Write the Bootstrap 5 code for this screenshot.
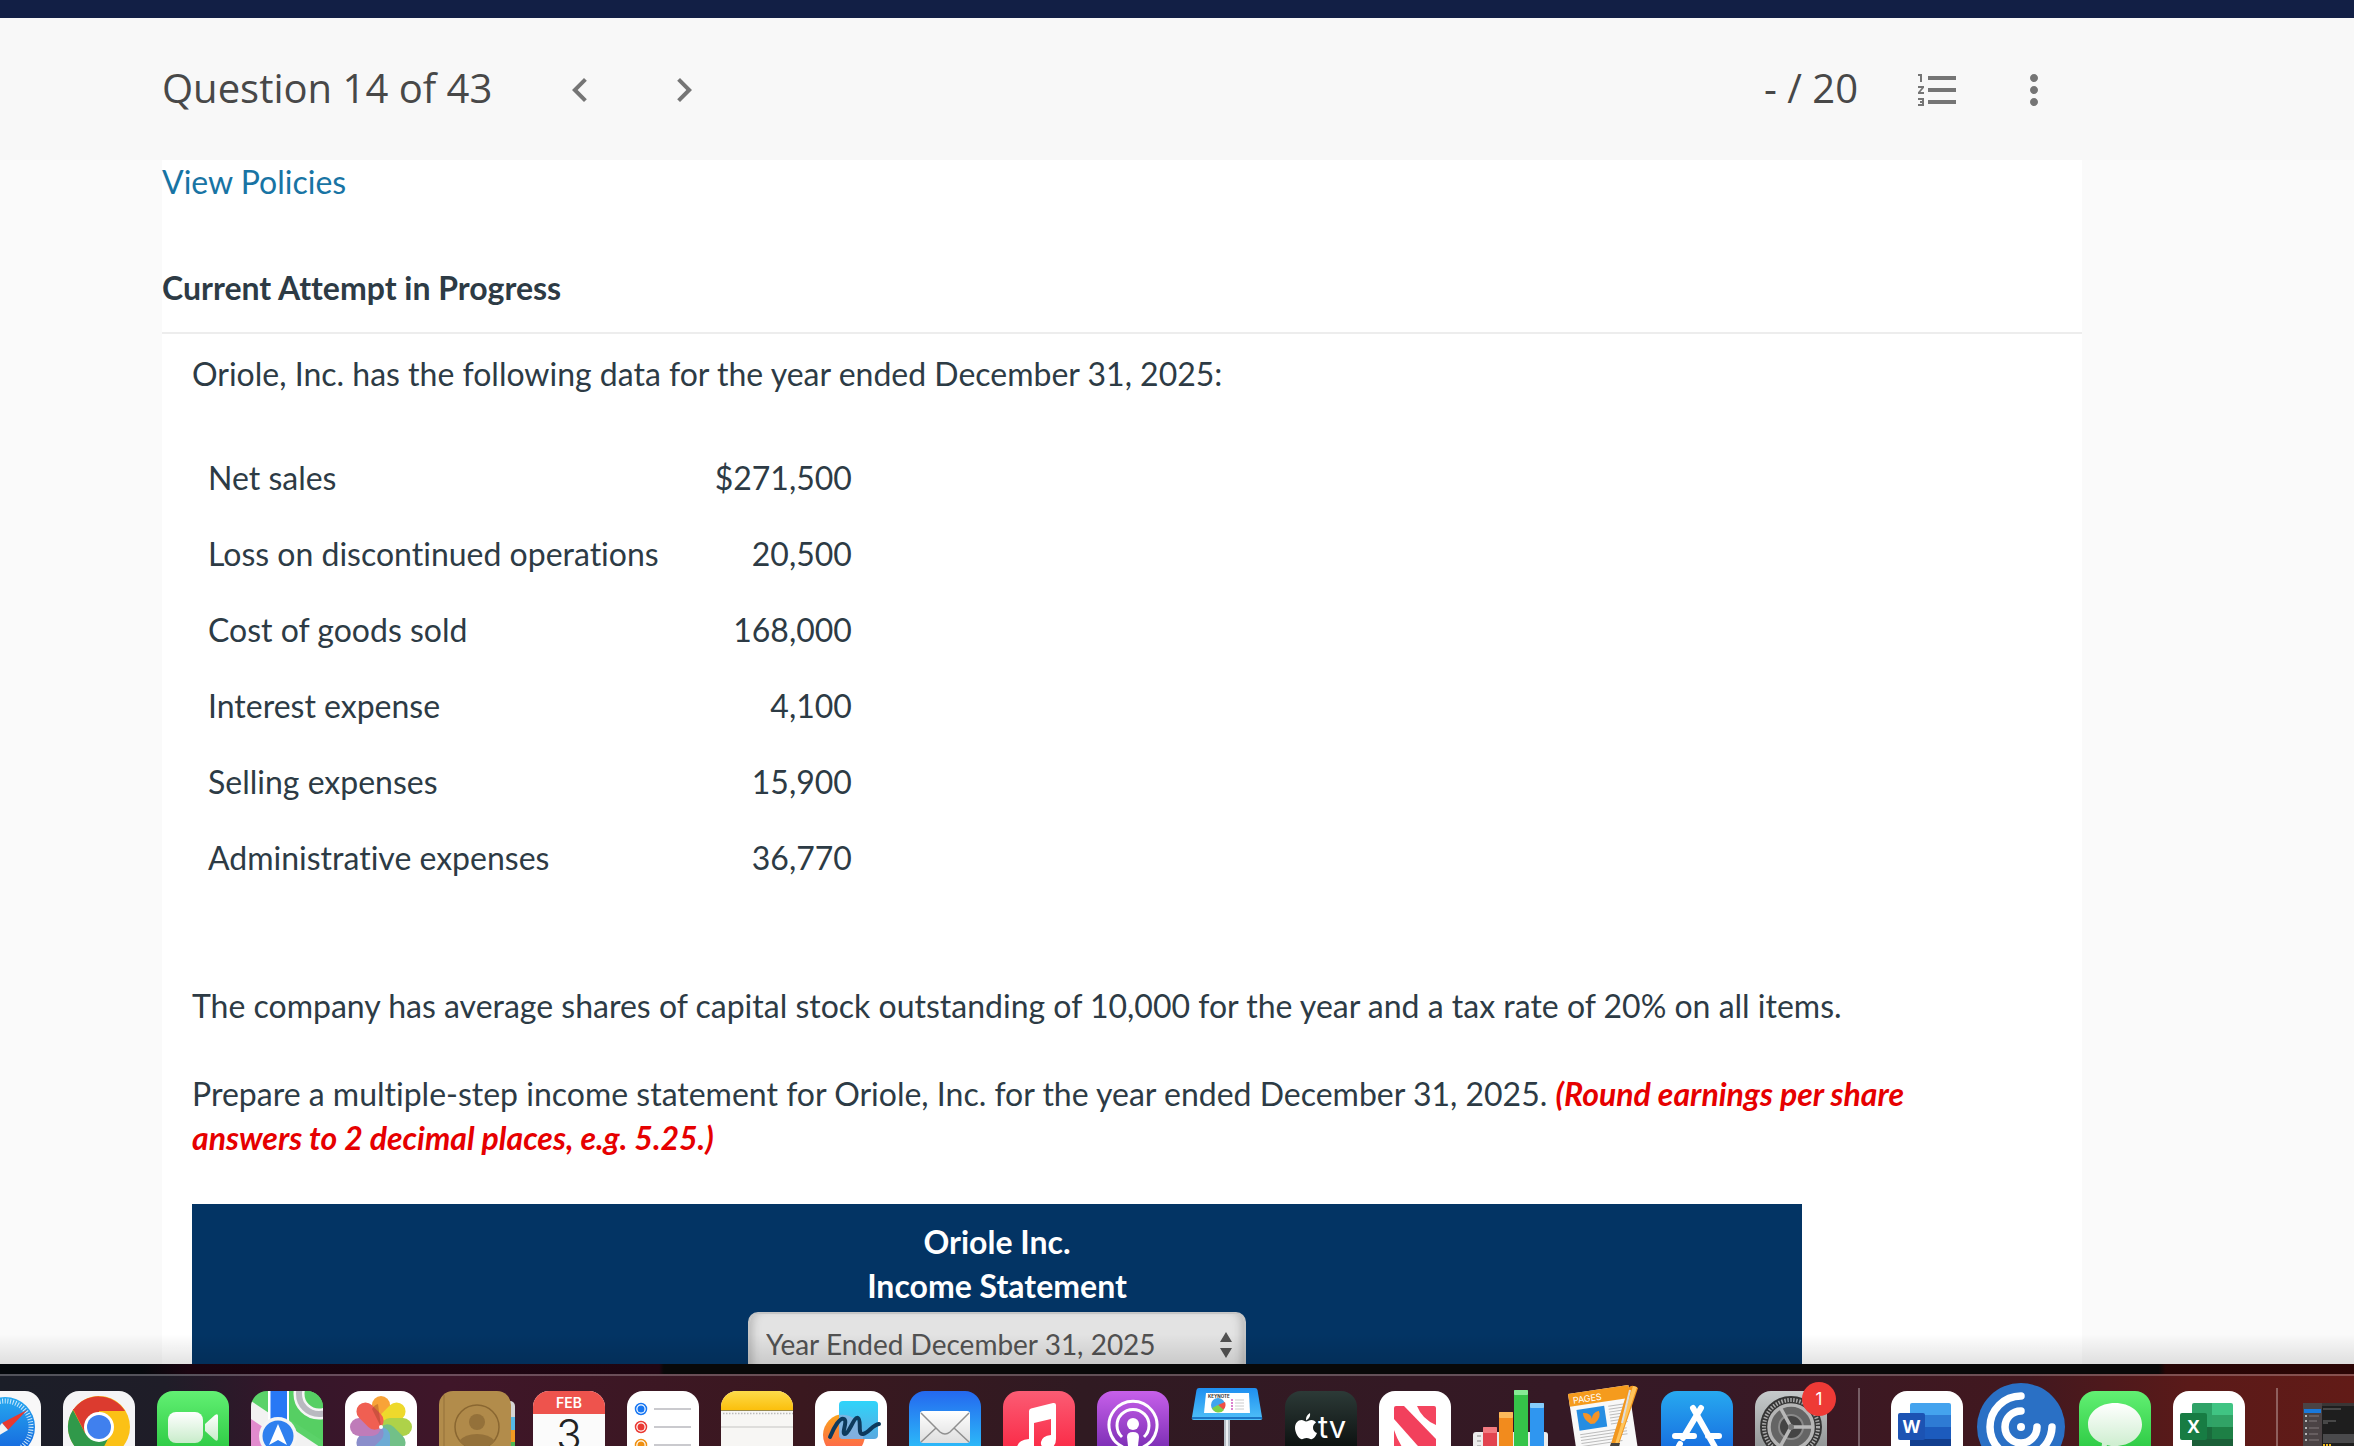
<!DOCTYPE html>
<html lang="en">
<head>
<meta charset="utf-8">
<meta name="viewport" content="width=device-width, initial-scale=1">
<title>Question 14 of 43</title>
<link href="https://cdn.jsdelivr.net/npm/bootstrap@5.3.0/dist/css/bootstrap.min.css" rel="stylesheet">
<style>
  body { font-family: Lato, "Liberation Sans", sans-serif; font-size: 32px; line-height: 44px; color: #2d3b45; background: #fafafa; font-variant-ligatures: none; }
  .top-strip { height: 18px; background: #121f45; }
  .page-gutter { padding-left: 162px; padding-right: 272px; }
  .question-bar { height: 142px; background: #f8f8f8; font-family: "Open Sans", sans-serif; font-size: 40px; color: #484848; padding-top: 2px; }
  .question-bar h1, .score { font-size: 40px; font-weight: 400; line-height: 48px; padding-bottom: 4px; }
  .question-nav { margin-left: 40px; }
  .icon-btn { width: 96px; height: 96px; padding: 0; border: 0; background: none; color: #757575; }
  .icon-btn svg { width: 48px; height: 48px; display: block; margin: 0 auto; fill: currentColor; }
  .viewport-area { min-height: 0; }
  .bottom-shade { height: 30px; background: linear-gradient(rgba(0,0,0,0), rgba(0,0,0,.11)); pointer-events: none; }
  .policy-link { color: #1874a4; text-decoration: none; }
  .attempt-title { font-size: 32px; line-height: 44px; font-weight: 700; padding: 62px 0 22px; border-bottom: 2px solid #ededed; }
  .question-body { padding: 18px 30px 0; }
  .data-table { margin-top: 44px; margin-bottom: 88px; }
  .data-table th, .data-table td { padding: 16px; line-height: 44px; font-weight: 400; }
  .data-table td { padding-left: 40px; }
  .round-note { color: #e60000; }
  .statement-head { width: 87%; max-width: 1610px; background: #033464; padding-top: 16px; margin-top: 44px; }
  .period-wrap { width: 498px; margin: 4px auto 0; }
  .period-select { height: 64px; font-size: 28px; line-height: 40px; color: #525252; border: 2px solid #c6c6c6; border-radius: 10px; padding: 8px 60px 8px 16px; background: #e3e3e3; box-shadow: inset 9px 0 8px -6px #b9b9b9, inset -9px 0 8px -6px #b9b9b9; }
  .period-arrows { right: 14px; top: 20px; width: 12px; height: 26px; pointer-events: none; }
  .dock { height: 82px; padding-top: 10px; background: linear-gradient(90deg, #04080c 0, #05080c 6%, #1a0410 8%, #200612 28%, #080808 28.2%, #080808 91.7%, #260505 92%, #2c0605 100%); }
  .dock-shelf { height: 72px; border-top: 2px solid rgba(255,255,255,.24); background: linear-gradient(90deg, #1b1e28 0, #1f1d28 7%, #35162a 12%, #3f1629 19%, #3a181f 34%, #301a22 46%, #341924 60%, #361926 72%, #42181f 86%, #5a1a19 93%, #621b17 100%); }
  .dock-row { gap: 22px; margin-left: -31px; padding-top: 15px; }
  .dock-row svg { width: 72px; height: 72px; flex: none; overflow: visible; display: block; }
  .dock-rule { width: 2px; height: 72px; margin: -3px 9px 0; background: rgba(255,255,255,.3); flex: none; }
</style>
<script src="https://cdn.jsdelivr.net/npm/bootstrap@5.3.0/dist/js/bootstrap.bundle.min.js"></script>
</head>
<body class="d-flex flex-column vh-100 overflow-hidden">

<div class="top-strip flex-shrink-0"></div>

<header class="question-bar page-gutter d-flex align-items-center flex-shrink-0">
  <h1 class="mb-0">Question 14 of 43</h1>
  <nav class="question-nav d-flex gap-2" aria-label="Questions">
    <button type="button" class="icon-btn" aria-label="Previous question"><svg viewBox="0 0 24 24"><path d="M15.41 7.41 14 6l-6 6 6 6 1.41-1.41L10.83 12z"/></svg></button>
    <button type="button" class="icon-btn" aria-label="Next question"><svg viewBox="0 0 24 24"><path d="M10 6 8.59 7.41 13.17 12l-4.58 4.59L10 18l6-6z"/></svg></button>
  </nav>
  <span class="score ms-auto me-4 pe-2">- / 20</span>
  <button type="button" class="icon-btn" aria-label="Question list"><svg viewBox="0 0 24 24"><path d="M2 17h2v.5H3v1h1v.5H2v1h3v-4H2v1zm1-9h1V4H2v1h1v3zm-1 3h1.8L2 13.1v.9h3v-1H3.2L5 10.9V10H2v1zm5-6v2h14V5H7zm0 14h14v-2H7v2zm0-6h14v-2H7v2z"/></svg></button>
  <button type="button" class="icon-btn" aria-label="More options"><svg viewBox="0 0 24 24"><path d="M12 8c1.1 0 2-.9 2-2s-.9-2-2-2-2 .9-2 2 .9 2 2 2zm0 2c-1.1 0-2 .9-2 2s.9 2 2 2 2-.9 2-2-.9-2-2-2zm0 6c-1.1 0-2 .9-2 2s.9 2 2 2 2-.9 2-2-.9-2-2-2z"/></svg></button>
</header>

<div class="viewport-area page-gutter flex-fill overflow-hidden position-relative">
  <main class="bg-white h-100">
    <a href="#" class="policy-link">View Policies</a>
    <h2 class="attempt-title mb-0">Current Attempt in Progress</h2>
    <div class="question-body">
      <p class="mb-0">Oriole, Inc. has the following data for the year ended December 31, 2025:</p>
      <table class="data-table">
        <tbody>
          <tr><th scope="row">Net sales</th><td class="text-end">$271,500</td></tr>
          <tr><th scope="row">Loss on discontinued operations</th><td class="text-end">20,500</td></tr>
          <tr><th scope="row">Cost of goods sold</th><td class="text-end">168,000</td></tr>
          <tr><th scope="row">Interest expense</th><td class="text-end">4,100</td></tr>
          <tr><th scope="row">Selling expenses</th><td class="text-end">15,900</td></tr>
          <tr><th scope="row">Administrative expenses</th><td class="text-end">36,770</td></tr>
        </tbody>
      </table>
      <p class="mb-0 pb-1">The company has average shares of capital stock outstanding of 10,000 for the year and a tax rate of 20% on all items.</p>
      <p class="mb-0 mt-4 pt-3">Prepare a multiple-step income statement for Oriole, Inc. for the year ended December 31, 2025. <strong class="round-note fst-italic">(Round earnings per share<br>answers to 2 decimal places, e.g. 5.25.)</strong></p>
      <section class="statement-head text-white text-center fw-bold">
        <div>Oriole Inc.</div>
        <div>Income Statement</div>
        <div class="period-wrap position-relative">
          <select class="period-select form-select" aria-label="Statement period"><option>Year Ended December 31, 2025</option></select>
          <svg class="period-arrows position-absolute" viewBox="0 0 12 26" fill="#525252"><path d="M6 0 12 10H0zM0 16H12L6 26z"/></svg>
        </div>
      </section>
    </div>
  </main>
  <div class="bottom-shade position-absolute bottom-0 start-0 end-0"></div>
</div>

<footer class="dock flex-shrink-0 overflow-hidden">
<div class="dock-shelf">
<div class="dock-row d-flex">
  <svg viewBox="0 0 72 72"><defs>
    <linearGradient id="gBlue" x2="0" y2="1"><stop stop-color="#27a9f0"/><stop offset="1" stop-color="#1461dc"/></linearGradient>
    <linearGradient id="gMail" x2="0" y2="1"><stop stop-color="#2468ef"/><stop offset="1" stop-color="#2fd0fb"/></linearGradient>
    <linearGradient id="gGreen" x2="0" y2="1"><stop stop-color="#62f073"/><stop offset="1" stop-color="#22c23a"/></linearGradient>
    <linearGradient id="gWhite" x2="0" y2="1"><stop stop-color="#fff"/><stop offset="1" stop-color="#c8ecca"/></linearGradient>
    <linearGradient id="gPaper" x2="0" y2="1"><stop stop-color="#fff"/><stop offset="1" stop-color="#dedede"/></linearGradient>
    <linearGradient id="gMusic" x2="0" y2="1"><stop stop-color="#fb5c74"/><stop offset="1" stop-color="#fa1f3c"/></linearGradient>
    <linearGradient id="gPod" x2="0" y2="1"><stop stop-color="#c760ea"/><stop offset="1" stop-color="#6a22a8"/></linearGradient>
    <linearGradient id="gTv" x2="0" y2="1"><stop stop-color="#2c3a37"/><stop offset="1" stop-color="#040606"/></linearGradient>
    <linearGradient id="gYel" x2="0" y2="1"><stop stop-color="#fddb4a"/><stop offset="1" stop-color="#fbbf0c"/></linearGradient>
    <linearGradient id="gGrey" x2="0" y2="1"><stop stop-color="#c6cacb"/><stop offset="1" stop-color="#858889"/></linearGradient>
    <linearGradient id="gFree" x2="0" y2="1"><stop stop-color="#2fd4fa"/><stop offset="1" stop-color="#5aa9e0"/></linearGradient>
    <linearGradient id="gKey" x2="0" y2="1"><stop stop-color="#1f8ff0"/><stop offset="1" stop-color="#4fc0f8"/></linearGradient>
    <linearGradient id="gOrg" x2="0" y2="1"><stop stop-color="#f9a51b"/><stop offset="1" stop-color="#ff5b55"/></linearGradient>
    <clipPath id="tile"><rect width="72" height="72" rx="16"/></clipPath></defs>
    <rect width="72" height="72" rx="16" fill="#f8f8f8"/><circle cx="36" cy="36" r="30" fill="url(#gBlue)"/><circle cx="36" cy="36" r="26" fill="none" stroke="#cfe9fb" stroke-width="5" stroke-dasharray="1 1.7"/>
    <path d="M58 19 33 32l6 7z" fill="#e8392f"/><path d="M33 32 14 54l25-15z" fill="#f4f4f4"/></svg>

  <svg viewBox="0 0 72 72"><rect width="72" height="72" rx="16" fill="#f4f4f6"/>
    <circle cx="36" cy="36" r="31" fill="#fbc116"/><path d="M36 36 10 19A31 31 0 0 1 62 20H36z" fill="#dc3b2f"/><path d="M10 19A31 31 0 0 0 35 67L47 44 22 42z" fill="#30994a"/><path d="M10 18 22 42 36 36V20z" fill="#dc3b2f"/>
    <circle cx="36" cy="36" r="15" fill="#fff"/><circle cx="36" cy="36" r="12" fill="#4080ee"/></svg>

  <svg viewBox="0 0 72 72"><rect width="72" height="72" rx="16" fill="url(#gGreen)"/><rect x="11" y="21" width="35" height="31" rx="8" fill="url(#gWhite)"/><path d="M48 33 58 24q3-2 3 1v22q0 4-3 2L48 40z" fill="url(#gWhite)"/></svg>

  <svg viewBox="0 0 72 72"><g clip-path="url(#tile)"><rect width="72" height="72" fill="#5bd269"/><path d="M0 10 72 58V72H0z" fill="#f2f2f2"/><path d="M0 28 30 48 20 72H0z" fill="#e28bce"/><path d="M38 0H72V50L38 28z" fill="#56cf63"/><circle cx="68" cy="3" r="20" fill="none" stroke="#f5f5f5" stroke-width="11"/><circle cx="68" cy="3" r="20" fill="none" stroke="#b9b9c0" stroke-width="6"/><path d="M17 0H38V40H17z" fill="#fff"/><path d="M19.500 0H36V40H19.500z" fill="#2878f5"/></g>
    <circle cx="27" cy="45" r="19" fill="#f5f5f5"/><circle cx="27" cy="45" r="15.500" fill="#2f80ef"/><path d="M27 33 36 54 27 49 18 54z" fill="#fff"/></svg>

  <svg viewBox="0 0 72 72"><rect width="72" height="72" rx="16" fill="#fff"/><g opacity=".88">
    <rect x="27" y="5" width="18" height="31" rx="9" fill="#f8971d"/>
    <rect x="27" y="5" width="18" height="31" rx="9" fill="#ecd40f" transform="rotate(45 36 36)"/>
    <rect x="27" y="5" width="18" height="31" rx="9" fill="#a3cc30" transform="rotate(90 36 36)"/>
    <rect x="27" y="5" width="18" height="31" rx="9" fill="#5fb878" transform="rotate(135 36 36)"/>
    <rect x="27" y="5" width="18" height="31" rx="9" fill="#5aa0cf" transform="rotate(180 36 36)"/>
    <rect x="27" y="5" width="18" height="31" rx="9" fill="#7a7fc4" transform="rotate(225 36 36)"/>
    <rect x="27" y="5" width="18" height="31" rx="9" fill="#b76bb0" transform="rotate(270 36 36)"/>
    <rect x="27" y="5" width="18" height="31" rx="9" fill="#ef4a3b" transform="rotate(315 36 36)"/></g>
    <path d="M36 36 27 18q2-4 6-5l3 23 8-21-8 21 18-8-18 8 19 5-19-5 10 18-10-18-6 18 6-18-18 8z" fill="#8b3a1c" opacity=".35"/><circle cx="36" cy="36" r="2" fill="#fff"/></svg>

  <svg viewBox="0 0 72 72"><rect x="60" y="10" width="16" height="70" rx="5" fill="#d4d4d4"/><path d="M60 26h16v13H60z" fill="#55b8e6"/><path d="M60 39h16v12H60z" fill="#f29a22"/><path d="M60 51h16v21H60z" fill="#4cb853"/><rect width="72" height="80" rx="14" fill="#b28c4b"/><path d="M5 4V72" stroke="#94713a" stroke-width="1"/><circle cx="38" cy="36" r="22" fill="#b08a4a" stroke="#8a6731" stroke-width="1.500"/><circle cx="38" cy="31" r="8" fill="#94713a"/><path d="M20 50Q26 43 38 43T56 50Q48 58 38 58T20 50" fill="#94713a"/></svg>

  <svg viewBox="0 0 72 72"><g clip-path="url(#tile)"><rect width="72" height="72" fill="#fbfbfb"/><rect width="72" height="23" fill="#ee534d"/></g><text x="36" y="17" font-family="Inter" font-weight="600" font-size="14" fill="#fff" text-anchor="middle">FEB</text><text x="36" y="59" font-family="Inter" font-weight="300" font-size="42" fill="#222" text-anchor="middle">3</text></svg>

  <svg viewBox="0 0 72 72"><rect width="72" height="72" rx="16" fill="#fff"/><g fill="none" stroke-width="1.500"><circle cx="14" cy="18" r="5.500" stroke="#1877f2"/><circle cx="14" cy="36" r="5.500" stroke="#ea3a33"/><circle cx="14" cy="54" r="5.500" stroke="#ef9012"/><path d="M27 18H64M27 36H64M27 54H64" stroke="#b9b9be"/></g><circle cx="14" cy="18" r="3.500" fill="#1877f2"/><circle cx="14" cy="36" r="3.500" fill="#ea3a33"/><circle cx="14" cy="54" r="3.500" fill="#ef9012"/></svg>

  <svg viewBox="0 0 72 72"><g clip-path="url(#tile)"><rect width="72" height="72" fill="#f7f6f4"/><rect width="72" height="19" fill="url(#gYel)"/><path d="M0 19.500H72" stroke="#9a8a4a" stroke-width="1"/><path d="M2 22.500H72" stroke="#bbb" stroke-width="1.500" stroke-dasharray="1.500 1.500"/><path d="M0 36H72" stroke="#d6d5d3" stroke-width="1.500"/></g></svg>

  <svg viewBox="0 0 72 72"><rect width="72" height="72" rx="16" fill="#fff"/><circle cx="29" cy="44" r="21" fill="url(#gOrg)"/><rect x="24" y="10" width="39" height="38" rx="4" fill="url(#gFree)"/><path d="M24 24a21 21 0 0 1 24 24H28q-4 0-4-4z" fill="#8fb0dc" opacity=".75"/><path d="M15 46C19 36 25 26 29 28S26 43 30 43 39 25 43 27 42 44 48 43 57 34 64 33" fill="none" stroke="#0d3a5c" stroke-width="4" stroke-linecap="round"/></svg>

  <svg viewBox="0 0 72 72"><rect width="72" height="72" rx="16" fill="url(#gMail)"/><rect x="11" y="20" width="50" height="32" rx="3" fill="url(#gPaper)"/><path d="M12 22 31 41q5 4 10 0L60 22M12 51 27 37M60 51 45 37" fill="none" stroke="#909090" stroke-width="1.500"/></svg>

  <svg viewBox="0 0 72 72"><rect width="72" height="72" rx="16" fill="url(#gMusic)"/><path d="M26 20Q26 18 28 17.500L50 12Q53 11.500 53 14V48Q53 57 45 57T38 51 48 44V28L31 32V55Q31 63 22 63T14 56 26 48z" fill="#fff"/></svg>

  <svg viewBox="0 0 72 72"><rect width="72" height="72" rx="16" fill="url(#gPod)"/><g fill="none" stroke="#fff" stroke-width="3"><path d="M26 56A24 24 0 1 1 46 56"/><path d="M25 46A16 16 0 1 1 47 46"/></g><circle cx="36" cy="33" r="6" fill="#fff"/><path d="M30 46q0-5 6-5t6 5l-2 18h-8z" fill="#fff"/></svg>

  <svg viewBox="0 0 72 72"><path d="M33 26h6v50h-6z" fill="#b8c0c8"/><path d="M35 26h2v50h-2z" fill="#edf0f3"/><path d="M8-3H64q2 0 2.500 2L71 26q1 3-2 3H3q-3 0-2-3L5.500-1Q6-3 8-3z" fill="url(#gKey)"/><path d="M1 27H71" stroke="#1b76c4" stroke-width="2"/><path d="M15 2H58L59 22H13z" fill="#fff"/><circle cx="27" cy="14" r="7" fill="#3fa4ef"/><path d="M27 14 34 11A7 7 0 0 1 32 19z" fill="#ef4e45"/><path d="M27 14 33 19A7 7 0 0 1 21 17z" fill="#7bd04a"/><path d="M40 9h2m-2 3h2m-2 3h2m-2 3h2" stroke="#d05ac0" stroke-width="1.500"/><path d="M44 9h9m-9 3h9m-9 3h9m-9 3h9" stroke="#ccc"/><text x="17" y="6.500" font-family="Inter" font-weight="700" font-size="4.500" fill="#333">KEYNOTE</text></svg>

  <svg viewBox="0 0 72 72"><rect width="72" height="72" rx="16" fill="url(#gTv)"/><path d="M25 22q1 5-4 7.500-.5-5 4-7.500zM21 30.500c2 0 3-1.500 5.500-1.500 2 0 3.800 1 4.500 2.400-4.500 2.600-3.700 8.800 1 10.600-1 2.800-3.400 6.200-5.600 6.200-1.900 0-2.400-1.200-4.800-1.200s-3 1.200-4.900 1.200C13.500 48 10 41.500 10 37c0-5 3-8 6.500-8 2 0 3.200 1.500 4.500 1.500z" fill="#fff"/><text x="33" y="47" font-family="Inter" font-size="31" fill="#fff">tv</text></svg>

  <svg viewBox="0 0 72 72"><rect width="72" height="72" rx="16" fill="#fff"/><path d="M38 15H55q2 0 2 2V34Q43 28 38 15zM15 39Q22 60 38 72H15z" fill="#f4455f"/><path d="M15 17q0-2 2-2H25L57 48V72H54L15 28z" fill="#f2405c"/></svg>

  <svg viewBox="0 0 72 72"><rect y="41" width="75" height="40" rx="3" fill="#ececec"/><path d="M4 45h4m-4 5h4m-4 5h4" stroke="#888"/><rect x="10" y="36" width="14" height="40" rx="1" fill="#e2434f"/><rect x="10" y="36" width="14" height="6" rx="1" fill="#f27a80"/><rect x="26" y="21" width="14" height="55" rx="1" fill="#f28b1d"/><rect x="26" y="21" width="14" height="6" rx="1" fill="#fbb95a"/><rect x="41" y="-1" width="14" height="75" rx="1" fill="#35c449"/><rect x="41" y="-1" width="14" height="5" rx="1" fill="#86ec95"/><rect x="57" y="12" width="14" height="62" rx="1" fill="#2f96f0"/><rect x="57" y="12" width="14" height="5" rx="1" fill="#86cdfb"/></svg>

  <svg viewBox="0 0 72 72"><g transform="rotate(-8.500 1 3)"><path d="M1 3H62V80H1z" fill="#f8f8f8"/><path d="M1 3H62V16H1z" fill="#f59b1d"/><text x="5" y="13.500" font-family="Inter" font-size="9" fill="#fff">PAGES</text><path d="M7 20H35V41H7z" fill="#268de2"/><path d="M13 24q8 1 8 7 1-6 8-7 2 7-6 12h-4q-7-6-6-12z" fill="#f59327"/><path d="M39 21H56M39 24H56M39 27H56M39 30H56M39 33H56M39 36H56M39 39H56M7 45H54M7 48H54M7 51H54M7 54H40M7 57H48" stroke="#bcbcbc" stroke-width="1"/></g><path d="M61-2Q64-8 71-3L51 56H43z" fill="#f2971d"/><path d="M66-5 70-4 51 53H48z" fill="#ffc45b"/><path d="M63-1 55 32" stroke="#ddd" stroke-width="2"/><path d="M44 52H53L48 72H38z" fill="#46423e"/></svg>

  <svg viewBox="0 0 72 72"><rect width="72" height="72" rx="16" fill="url(#gBlue)"/><g stroke="#fff" stroke-width="6" stroke-linecap="round"><path d="M32 17 55 58M40 17 22 47M14 45H33M47 45H58M19 53 17 57"/></g></svg>

  <svg viewBox="0 0 72 72"><rect width="72" height="72" rx="16" fill="url(#gGrey)"/><circle cx="36" cy="36" r="31" fill="#353535"/><circle cx="36" cy="36" r="27" fill="none" stroke="#aaa" stroke-width="4" stroke-dasharray="1.500 1.500"/><circle cx="36" cy="36" r="22" fill="#656565" stroke="#b5b5b5" stroke-width="3.500"/><circle cx="36" cy="36" r="12" fill="#444" stroke="#8a8a8a" stroke-width="2"/><path d="M36 36 25 16M36 36H58M36 36 25 56" stroke="#b8b8b8" stroke-width="3.500"/><circle cx="36" cy="36" r="3" fill="#777"/><circle cx="64" cy="8" r="17" fill="#ee3a36"/><text x="64" y="14" font-family="Inter" font-size="17" fill="#fff" text-anchor="middle">1</text></svg>

  <div class="dock-rule"></div>

  <svg viewBox="0 0 72 72"><rect width="72" height="72" rx="16" fill="#fff"/><path d="M19 24V14q0-2 2-2H58q2 0 2 2V24z" fill="#44a3ee"/><path d="M19 24H60V36H19z" fill="#2e7bd4"/><path d="M19 36H60V48H19z" fill="#1c5bbd"/><path d="M19 48H60V72H19z" fill="#123e8e"/><rect x="7" y="22" width="27" height="27" rx="2" fill="#1c53b3"/><text x="20.500" y="42" font-family="Open Sans" font-weight="700" font-size="18" fill="#fff" text-anchor="middle">W</text></svg>

  <svg viewBox="0 0 72 72"><circle cx="36" cy="36" r="44" fill="#2a70c5"/><g fill="none" stroke="#fff" stroke-width="7.500" stroke-linecap="round"><path d="M36 5A31 31 0 0 0 36 67M67 36A31 31 0 0 1 51 62"/><path d="M36 20A16 16 0 1 0 52 36"/></g><circle cx="36" cy="36" r="4" fill="#fff"/></svg>

  <svg viewBox="0 0 72 72"><rect width="72" height="72" rx="16" fill="url(#gGreen)"/><path d="M36 12c15 0 27 9 27 21.500S51 55 36 55c-3 0-5 0-8-1-1 4-6 6-9 6 3-2 4-5 4-8C14 49 9 42 9 33.500 9 21 21 12 36 12z" fill="url(#gWhite)"/></svg>

  <svg viewBox="0 0 72 72"><rect width="72" height="72" rx="16" fill="#fff"/><path d="M19 24V14q0-2 2-2H39V24z" fill="#2fa267"/><path d="M39 12H58q2 0 2 2V24H39z" fill="#40c483"/><path d="M19 24H39V36H19z" fill="#2fa267"/><path d="M39 24H60V36H39z" fill="#31a366"/><path d="M19 36H39V48H19z" fill="#196b3c"/><path d="M39 36H60V48H39z" fill="#1d7f45"/><path d="M19 48H60V72H19z" fill="#1b5f38"/><rect x="7" y="22" width="27" height="27" rx="2" fill="#177c43"/><text x="20.500" y="42" font-family="Open Sans" font-weight="700" font-size="18" fill="#fff" text-anchor="middle">X</text></svg>

  <div class="dock-rule"></div>

  <svg viewBox="0 0 72 72"><path d="M-6 12H80V72H-6z" fill="#1e1e1e"/><path d="M-6 12H13V72H-6z" fill="#4b4345"/><path d="M13 12H80V15H13z" fill="#3a3636"/><path d="M-5 18H12V22H-5z" fill="#1979dc"/><path d="M14 18H32M14 30H27M14 32H19" stroke="#555" stroke-width="1.500"/><path d="M14 43H80V52H14z" fill="#4a4a4c"/><path d="M14 54h2m1 0h2m1 0h2" stroke="#f0b81c" stroke-width="2"/><path d="M-4 25h2m-2 5h2m-2 7h2m-2 6h2m-2 6h2" stroke="#ddd" stroke-width="1.500"/><path d="M0 25h10M0 30h8M0 37h10M0 43h9M0 49h10" stroke="#837b7d"/></svg>
</div>
</div>
</footer>
</body>
</html>
